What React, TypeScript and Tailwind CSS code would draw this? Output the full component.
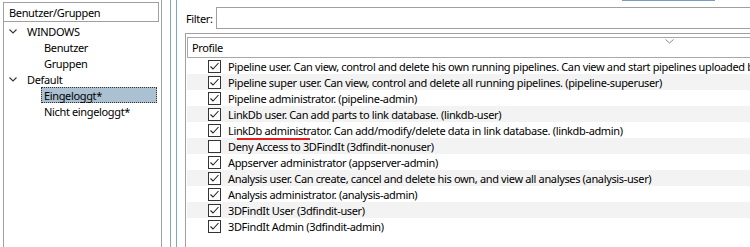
import React from "react";

const profiles: { label: string; checked: boolean; underline?: boolean }[] = [
  { label: "Pipeline user. Can view, control and delete his own running pipelines. Can view and start pipelines uploaded by all users. (pipeline-user)", checked: true },
  { label: "Pipeline super user. Can view, control and delete all running pipelines. (pipeline-superuser)", checked: true },
  { label: "Pipeline administrator. (pipeline-admin)", checked: true },
  { label: "LinkDb user. Can add parts to link database. (linkdb-user)", checked: true },
  { label: "LinkDb administrator. Can add/modify/delete data in link database. (linkdb-admin)", checked: true, underline: true },
  { label: "Deny Access to 3DFindIt (3dfindit-nonuser)", checked: false },
  { label: "Appserver administrator (appserver-admin)", checked: true },
  { label: "Analysis user. Can create, cancel and delete his own, and view all analyses (analysis-user)", checked: true },
  { label: "Analysis administrator. (analysis-admin)", checked: true },
  { label: "3DFindIt User (3dfindit-user)", checked: true },
  { label: "3DFindIt Admin (3dfindit-admin)", checked: true },
];

function Chevron() {
  return (
    <svg width="8" height="5" viewBox="0 0 8 5" className="shrink-0">
      <path d="M0.5 0.5 L4 4 L7.5 0.5" fill="none" stroke="#333" strokeWidth="1.1" />
    </svg>
  );
}

function CheckBox({ checked }: { checked: boolean }) {
  return (
    <span className="flex h-[13px] w-[13px] shrink-0 items-center justify-center border border-[#333] bg-white">
      {checked && (
        <svg width="11" height="11" viewBox="0 0 11 11">
          <path d="M1.5 5.5 L4 8 L9.5 2" fill="none" stroke="#222" strokeWidth="1.1" />
        </svg>
      )}
    </span>
  );
}

export default function App() {
  return (
    <div className="flex h-[247px] w-[750px] overflow-hidden bg-white font-['Noto_Sans',sans-serif] text-[11px] leading-none tracking-[-0.35px] text-black">
      {/* left: users / groups tree */}
      <div className="ml-[3px] flex w-[159px] shrink-0 flex-col border-r border-[#a0a0a0]">
        <div className="mt-[2px] flex h-[20px] w-[156px] items-center border border-[#a0a0a0] pl-[5px]">
          Benutzer/Gruppen
        </div>
        <div className="flex flex-1 flex-col border-l border-[#a0a0a0] pt-[1px]">
          <div className="flex h-[16px] items-center gap-[10px] pl-[5px]">
            <Chevron />
            <span>WINDOWS</span>
          </div>
          <div className="flex h-[16px] items-center pl-[40px]">Benutzer</div>
          <div className="flex h-[16px] items-center pl-[40px]">Gruppen</div>
          <div className="flex h-[16px] items-center gap-[10px] pl-[5px]">
            <Chevron />
            <span>Default</span>
          </div>
          <div className="flex h-[16px] items-center pl-[37px]">
            <span className="flex h-[16px] w-[116px] items-center border border-dotted border-[#333] bg-[#abc0d0] pl-[2px]">
              Eingeloggt*
            </span>
          </div>
          <div className="flex h-[16px] items-center pl-[40px]">Nicht eingeloggt*</div>
        </div>
      </div>

      {/* splitter */}
      <div className="ml-[8px] w-px shrink-0 bg-[#7fa5c8]" />
      <div className="ml-[5px] w-px shrink-0 bg-[#7fa5c8]" />

      {/* right: profiles */}
      <div className="ml-[8px] flex min-w-0 flex-1 flex-col">
        <div className="ml-[437px] h-px w-[93px] bg-[#7a9cbd]" />
        <div className="mt-[6px] flex h-[22px] items-center">
          <span className="w-[31px] shrink-0 pl-px">Filter:</span>
          <div className="h-[22px] flex-1 border border-r-0 border-[#a0a0a0] bg-white" />
        </div>
        <div className="mt-[4px] flex flex-1 flex-col border-l border-t border-[#a0a0a0] pl-px pt-[3px]">
          <div className="relative flex h-[21px] shrink-0 items-center border-y border-l border-[#a8a8a8] pl-[4px]">
            Profile
            <svg width="9" height="5" viewBox="0 0 9 5" className="absolute left-[477px] top-[1px]">
              <path d="M0.5 0.5 L4.5 4 L8.5 0.5" fill="none" stroke="#888" strokeWidth="1" />
            </svg>
          </div>
          {profiles.map((p, i) => (
            <div
              key={p.label}
              className={`flex h-[16px] shrink-0 items-center gap-[7px] whitespace-nowrap pl-[21px] ${
                i % 2 === 1 ? "bg-[#f3f3f3]" : "bg-white"
              }`}
            >
              <CheckBox checked={p.checked} />
              <span className="relative">
                {p.label}
                {p.underline && (
                  <span className="absolute left-[9px] top-[13px] h-[2px] w-[73px] bg-[#e02020]" />
                )}
              </span>
            </div>
          ))}
        </div>
      </div>
    </div>
  );
}
